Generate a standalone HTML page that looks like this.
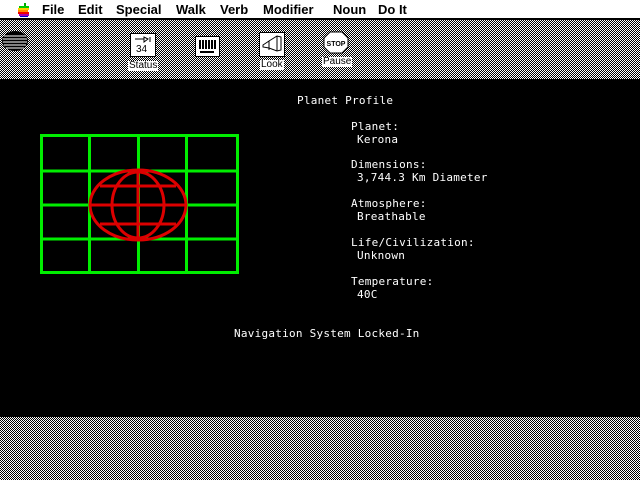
<!DOCTYPE html>
<html><head><style>
*{margin:0;padding:0;box-sizing:border-box}
body{width:640px;height:480px;overflow:hidden;background:#000;position:relative;font-family:"Liberation Sans",sans-serif}
.dith{position:absolute;left:0;width:640px;background:repeating-conic-gradient(#000 0 25%,#fff 0 50%) 0 0/2px 2px}
#menu{position:absolute;left:0;top:0;width:640px;height:19px;background:#fff;border-bottom:1px solid #000}
#menu span{position:absolute;top:2px;font-weight:bold;font-size:13px;color:#000}
.t{position:absolute;color:#fff;font-size:11px;letter-spacing:.25px;font-family:"DejaVu Sans Mono","Liberation Mono",monospace}
.lbl{position:absolute;background:#fff;color:#000;font-size:10px;line-height:10px;padding:0 1px}
.box{position:absolute;background:#fff;border:1px solid #000}
</style></head><body>
<div id="menu">
<svg style="position:absolute;left:18px;top:3px" width="12" height="14" viewBox="0 0 12 14">
<rect x="6" y="0" width="2" height="3" fill="#0a0"/>
<rect x="1" y="3" width="10" height="2" fill="#0c0"/><rect x="0" y="5" width="11" height="2" fill="#fc0"/><rect x="0" y="7" width="10" height="2" fill="#f80"/><rect x="0" y="9" width="11" height="2" fill="#e00"/><rect x="1" y="11" width="10" height="2" fill="#a0a"/><rect x="2" y="13" width="8" height="1" fill="#00c"/></svg>
<span style="left:42px">File</span><span style="left:78px">Edit</span><span style="left:116px">Special</span><span style="left:176px">Walk</span><span style="left:220px">Verb</span><span style="left:263px">Modifier</span><span style="left:333px">Noun</span><span style="left:378px">Do It</span>
</div>
<div class="dith" style="top:20px;height:59px"></div>
<div class="dith" style="top:417px;height:63px"></div>
<svg style="position:absolute;left:2px;top:30px" width="28" height="22"><ellipse cx="13" cy="11" rx="13" ry="10" fill="#000"/><g stroke="#fff" stroke-width="1"><line x1="2" y1="6" x2="24" y2="6"/><line x1="1" y1="9" x2="25" y2="9"/><line x1="1" y1="12" x2="25" y2="12"/><line x1="2" y1="15" x2="24" y2="15"/><line x1="4" y1="18" x2="22" y2="18"/></g></svg>
<div class="box" style="left:130px;top:33px;width:26px;height:24px"><div style="position:absolute;left:5px;top:10px;font-size:10px">34</div><svg style="position:absolute;left:3px;top:2px" width="18" height="8"><path d="M1 3h9M10 1v5l4-3zM16 1v5" stroke="#000" fill="none"/></svg></div>
<div class="lbl" style="left:128px;top:61px">Status</div>
<div class="box" style="left:195px;top:36px;width:25px;height:21px"><div style="position:absolute;left:3px;top:3px;width:17px;height:9px;background:repeating-linear-gradient(90deg,#000 0 2px,#fff 2px 3px)"></div><div style="position:absolute;left:4px;top:14px;width:14px;height:2px;background:#000"></div></div>
<div class="box" style="left:259px;top:32px;width:26px;height:25px"><svg width="24" height="23"><path d="M3 12l6-4 8-5 4 1v13l-4 1-8-3-6-1z" stroke="#000" fill="none"/><path d="M9 8v9M17 3v15" stroke="#000"/></svg></div>
<div class="lbl" style="left:260px;top:60px">Look</div>
<svg style="position:absolute;left:323px;top:31px" width="26" height="23"><polygon points="7,1 19,1 25,7 25,16 19,22 7,22 1,16 1,7" fill="#fff" stroke="#000"/><text x="13" y="15" font-size="7" text-anchor="middle" font-weight="bold" font-family="Liberation Sans">STOP</text></svg>
<div class="lbl" style="left:322px;top:57px">Pause</div>
<svg style="position:absolute;left:0;top:0" width="640" height="480">
<g fill="none" stroke="#00ee00" stroke-width="3">
<rect x="41.5" y="135.5" width="196" height="137"/>
<line x1="89.5" y1="135" x2="89.5" y2="273"/><line x1="138.5" y1="135" x2="138.5" y2="273"/><line x1="186.5" y1="135" x2="186.5" y2="273"/>
<line x1="41" y1="171" x2="238" y2="171"/><line x1="41" y1="205" x2="238" y2="205"/><line x1="41" y1="239" x2="238" y2="239"/>
</g>
<g fill="none" stroke="#dd0000" stroke-width="3">
<ellipse cx="138" cy="205" rx="48" ry="35"/>
<ellipse cx="138" cy="205" rx="26" ry="33"/>
<line x1="138" y1="170" x2="138" y2="240"/>
<line x1="90" y1="205" x2="186" y2="205"/>
<line x1="100" y1="186" x2="176" y2="186"/><line x1="100" y1="224" x2="176" y2="224"/>
</g></svg>
<div class="t" style="left:297px;top:94px">Planet Profile</div>
<div class="t" style="left:351px;top:120px">Planet:</div>
<div class="t" style="left:357px;top:133px">Kerona</div>
<div class="t" style="left:351px;top:158px">Dimensions:</div>
<div class="t" style="left:357px;top:171px">3,744.3 Km Diameter</div>
<div class="t" style="left:351px;top:197px">Atmosphere:</div>
<div class="t" style="left:357px;top:210px">Breathable</div>
<div class="t" style="left:351px;top:236px">Life/Civilization:</div>
<div class="t" style="left:357px;top:249px">Unknown</div>
<div class="t" style="left:351px;top:275px">Temperature:</div>
<div class="t" style="left:357px;top:288px">40C</div>
<div class="t" style="left:234px;top:327px">Navigation System Locked-In</div>
</body></html>
